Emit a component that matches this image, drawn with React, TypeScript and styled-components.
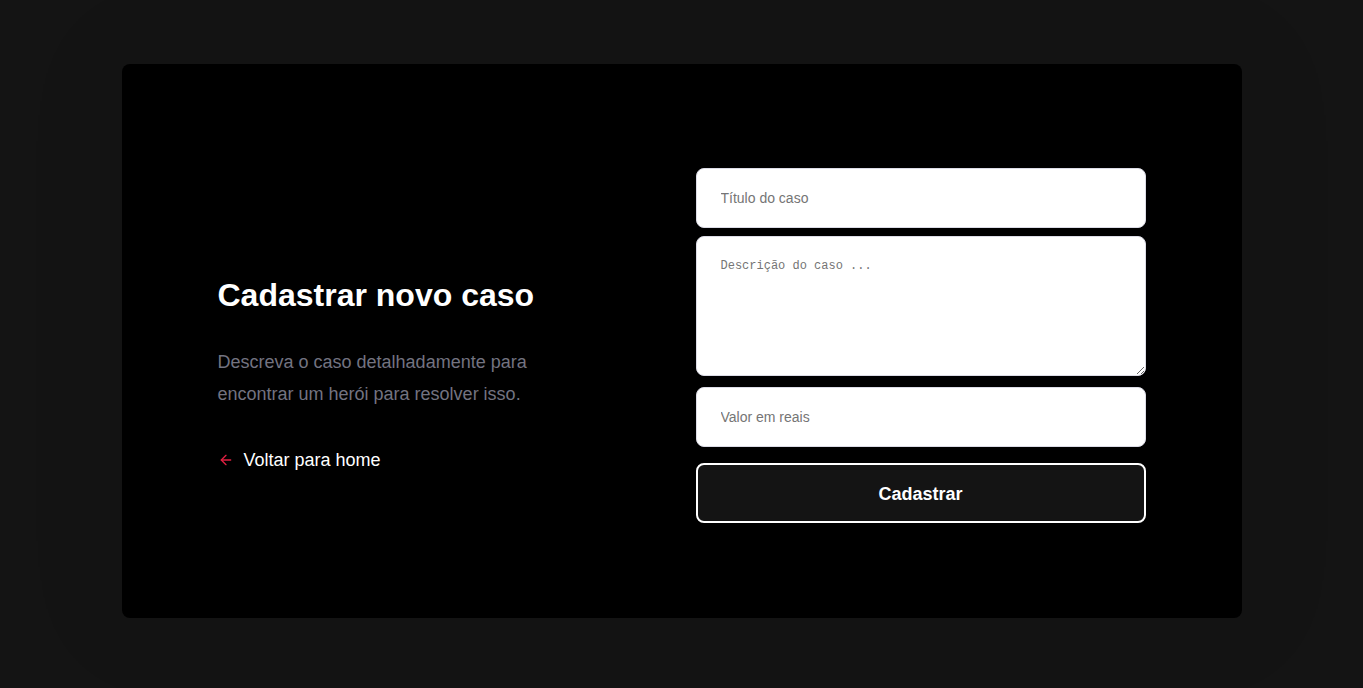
import React from "react";
import styled, { createGlobalStyle } from "styled-components";

const Global = createGlobalStyle`
  * { box-sizing: border-box; }
  html, body { margin: 0; padding: 0; background: #141414; }
  body { font-family: "Liberation Sans", Arial, sans-serif; -webkit-font-smoothing: antialiased; }
`;

const Page = styled.div`
  width: 100%;
  height: 688px;
  display: flex;
  justify-content: center;
  padding-top: 64px;
`;

const Card = styled.div`
  width: 1120px;
  height: 554px;
  padding: 96px;
  background: #000;
  border-radius: 8px;
  box-shadow: 0 0 100px rgba(0, 0, 0, 0.1);
  display: flex;
  justify-content: space-between;
  align-items: center;
`;

const Section = styled.section`
  width: 100%;
  max-width: 380px;
  margin-top: 1px;
`;

const Title = styled.h1`
  margin: 64px 0 32px;
  font-size: 32px;
  font-weight: 700;
  color: #fff;
  line-height: 37px;
`;

const Text = styled.p`
  margin: 0;
  font-size: 18px;
  color: #737380;
  line-height: 32px;
`;

const BackLink = styled.a`
  display: flex;
  align-items: center;
  margin-top: 40px;
  color: #fff;
  font-size: 18px;
  text-decoration: none;
  line-height: 21px;
  svg { margin-right: 10px; }
`;

const Form = styled.form`
  width: 100%;
  max-width: 450px;
  margin-top: 8px;
  display: flex;
  flex-direction: column;
`;

const Input = styled.input<{ $gap?: number }>`
  width: 100%;
  height: 60px;
  margin-top: ${(p) => p.$gap ?? 0}px;
  padding: 0 24px;
  border: 1px solid #dcdce6;
  border-radius: 8px;
  background: #fff;
  color: #333;
  font: 14px "Liberation Sans", Arial, sans-serif;
  outline: none;
  &::placeholder { color: #757575; }
`;

const TextArea = styled.textarea`
  display: block;
  width: 100%;
  min-height: 140px;
  height: 140px;
  margin-top: 8px;
  padding: 22px 24px;
  border: 1px solid #dcdce6;
  border-radius: 8px;
  background: #fff;
  font: 12px "Liberation Mono", monospace;
  line-height: 14px;
  outline: none;
  &::placeholder { color: #757575; }
`;

const Button = styled.button`
  width: 100%;
  height: 60px;
  margin-top: 16px;
  padding: 4px 0 0;
  background: #141414;
  border: 2px solid #fff;
  border-radius: 8px;
  color: #fff;
  font: 700 18px "Liberation Sans", Arial, sans-serif;
  cursor: pointer;
`;

const ArrowLeft = () => (
  <svg width="16" height="16" viewBox="0 0 24 24" fill="none" stroke="#e02041" strokeWidth="2" strokeLinecap="round" strokeLinejoin="round">
    <line x1="19" y1="12" x2="5" y2="12" />
    <polyline points="12 19 5 12 12 5" />
  </svg>
);

export default function App() {
  return (
    <>
      <Global />
      <Page>
        <Card>
          <Section>
            <Title>Cadastrar novo caso</Title>
            <Text>Descreva o caso detalhadamente para encontrar um herói para resolver isso.</Text>
            <BackLink href="#">
              <ArrowLeft />
              Voltar para home
            </BackLink>
          </Section>
          <Form onSubmit={(e) => e.preventDefault()}>
            <Input placeholder="Título do caso" />
            <TextArea placeholder="Descrição do caso ..." />
            <Input $gap={11} placeholder="Valor em reais" />
            <Button type="submit">Cadastrar</Button>
          </Form>
        </Card>
      </Page>
    </>
  );
}
